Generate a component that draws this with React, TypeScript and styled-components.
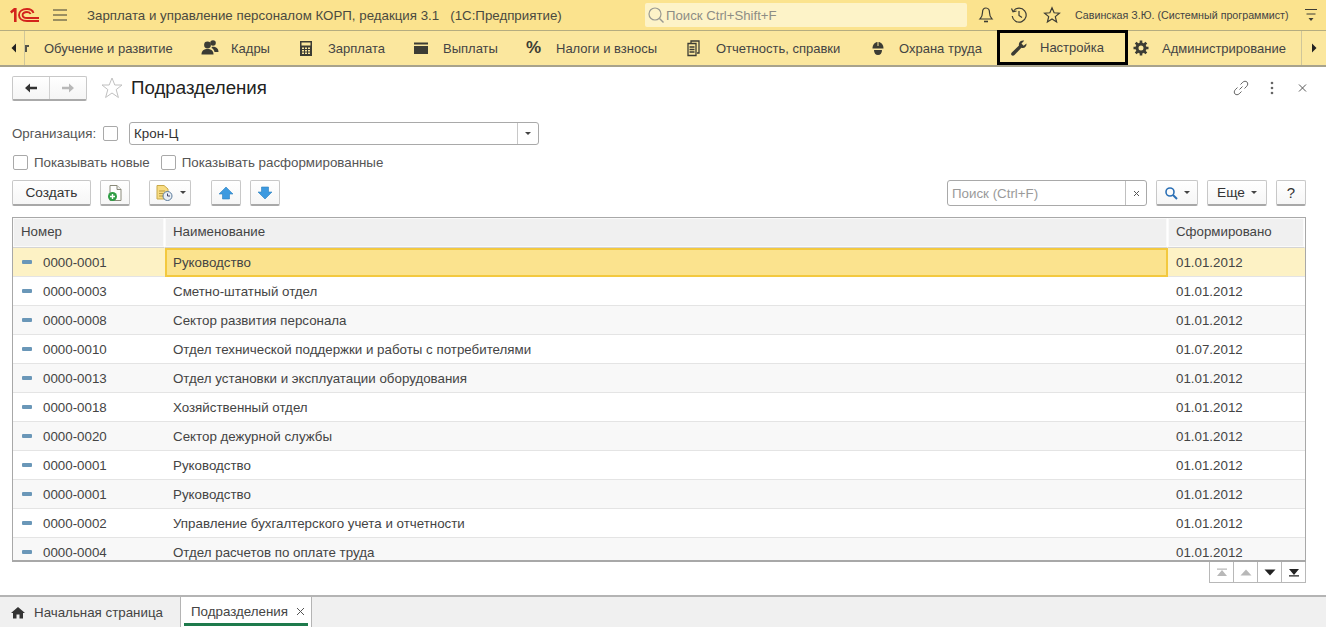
import React from "react";
import styled, { createGlobalStyle } from "styled-components";

const Global = createGlobalStyle`
  html, body { margin: 0; padding: 0; background: #fff; }
  body { font-family: "Liberation Sans", Arial, sans-serif; font-size: 13.33px; color: #333; overflow: hidden; }
  * { box-sizing: border-box; }
`;

const Page = styled.div`width: 1326px; height: 627px; display: flex; flex-direction: column; background: #fff; overflow: hidden;`;

const TitleBar = styled.header`height: 31px; background: #fbe38e; border-bottom: 1px solid #b5ad80; display: flex; align-items: center; flex: none;`;
const Logo = styled.svg`width: 29px; height: 14px; margin-left: 10px; flex: none;`;
const Burger = styled.svg`width: 14px; height: 12px; margin-left: 14px; flex: none;`;
const AppTitle = styled.div`margin-left: 20px; width: 558px; font-size: 13.3px; color: #4a4a40; white-space: pre; flex: none;`;
const GlobalSearch = styled.div`width: 322px; height: 24px; background: #fdf3c8; border-radius: 2px; display: flex; align-items: center; padding-left: 2px; gap: 1px; color: #8d8d85; font-size: 13.2px; flex: none;`;
const TopIcon = styled.svg<{ $ml: number }>`width: 18px; height: 18px; flex: none; margin-left: ${p => p.$ml}px;`;
const UserName = styled.div`margin-left: 14px; width: 220px; font-size: 10.7px; color: #444; white-space: nowrap; flex: none;`;
const TopMenu = styled.svg`width: 14px; height: 16px; margin-left: 9px; flex: none;`;

const SectionBar = styled.nav`height: 36px; background: #fbe79e; border-bottom: 2px solid #a8a38c; display: flex; align-items: stretch; flex: none;`;
const ScrollBtn = styled.div<{ $w: number; $pl: number; $side: string }>`width: ${p => p.$w}px; display: flex; align-items: center; padding-left: ${p => p.$pl}px; flex: none; border-${p => p.$side}: 1px solid #cfc69a;`;
const Section = styled.div<{ $w: number; $pl: number }>`display: flex; align-items: center; width: ${p => p.$w}px; flex: none; padding-left: ${p => p.$pl}px; font-size: 13px; color: #444; white-space: nowrap;`;
const ActiveSection = styled(Section)`border: 3px solid #000; margin-top: -1px; height: 35px;`;
const SectionIcon = styled.svg<{ $mr: number }>`width: 18px; height: 18px; flex: none; margin-right: ${p => p.$mr}px;`;
const Percent = styled.span`width: 18px; margin-right: 12px; font-size: 17px; font-weight: 700; line-height: 18px; color: #3c3c34; flex: none;`;
const Stub = styled.svg`width: 4px; height: 7px; flex: none; margin-right: 15px;`;

const FormHead = styled.div`height: 42px; display: flex; align-items: center; padding: 0 14px 0 12px; flex: none;`;
const NavGroup = styled.div`width: 75px; height: 25px; border: 1px solid #c8c8c8; border-bottom: 2px solid #aaa; border-radius: 2px; display: flex; flex: none; background: linear-gradient(#fff, #f5f5f5);`;
const NavBtn = styled.div`flex: 1; display: flex; align-items: center; justify-content: center; & + & { border-left: 1px solid #d0d0d0; }`;
const FavStar = styled.svg`width: 24px; height: 24px; margin-left: 13px; flex: none;`;
const FormTitle = styled.h1`margin: 0 0 0 7px; font-weight: 400; font-size: 18.7px; color: #222; flex: 1;`;
const HeadIcon = styled.svg<{ $ml: number }>`width: 18px; height: 18px; flex: none; margin-left: ${p => p.$ml}px;`;

const OrgRow = styled.div`height: 24px; display: flex; align-items: center; padding-left: 12px; margin-top: 12px; flex: none;`;
const Label = styled.span<{ $ml?: number }>`font-size: 13.33px; color: #555; white-space: nowrap; margin-left: ${p => p.$ml || 0}px;`;
const Check = styled.span<{ $ml?: number }>`width: 15px; height: 15px; border: 1px solid #a9a9a9; border-radius: 2px; background: #fff; flex: none; display: block; margin-left: ${p => p.$ml || 0}px;`;
const Combo = styled.div`width: 410px; height: 23px; margin-left: 11px; border: 1px solid #a9a9a9; border-radius: 3px; display: flex; align-items: center; padding-left: 4px; font-size: 13.33px; color: #333; flex: none;`;
const ComboValue = styled.span`flex: 1;`;
const ComboDrop = styled.span`width: 21px; height: 100%; border-left: 1px solid #c8c8c8; display: flex; align-items: center; justify-content: center;`;
const Caret = styled.i`display: block; width: 0; height: 0; border-left: 3px solid transparent; border-right: 3px solid transparent; border-top: 3px solid #444; flex: none;`;

const CheckRow = styled.div`height: 20px; margin-top: 7px; display: flex; align-items: center; padding-left: 13px; flex: none;`;

const Toolbar = styled.div`height: 26px; margin-top: 8px; display: flex; align-items: stretch; padding: 0 20px 0 12px; flex: none;`;
const Btn = styled.div<{ $w: number; $ml?: number; $gap?: number }>`width: ${p => p.$w}px; margin-left: ${p => p.$ml || 0}px; border: 1px solid #c8c8c8; border-bottom: 2px solid #a8a8a8; border-radius: 2px; background: linear-gradient(#fff, #f6f6f6); display: flex; align-items: center; justify-content: center; gap: ${p => p.$gap || 0}px; font-size: 13.7px; color: #333; flex: none;`;
const HelpBtn = styled(Btn)`font-size: 15px;`;
const SearchBox = styled.div`width: 200px; margin-left: auto; border: 1px solid #a9a9a9; border-radius: 3px; display: flex; align-items: center; padding-left: 4px; font-size: 13.33px; color: #9a9a9a; flex: none;`;
const SearchText = styled.span`flex: 1;`;
const SearchClear = styled.span`width: 21px; height: 100%; border-left: 1px solid #c0c0c0; display: flex; align-items: center; justify-content: center;`;

const TableWrap = styled.div`margin: 11px 20px 0 12px; height: 345px; border: 1px solid #a8a8a8; border-bottom-width: 2px; overflow: hidden; flex: none;`;
const Grid = styled.div`display: grid; grid-template-columns: 152px 1003px 1fr;`;
const HeadCell = styled.div`height: 30px; background: #f0f0f0; border-right: 1px solid #fff; border-bottom: 1px solid #d4d4d4; display: flex; align-items: center; padding: 0 0 2px 8px; font-size: 13.3px; color: #444; box-shadow: inset 0 0 0 1px #fafafa;`;
const Cell = styled.div<{ $sel?: boolean; $odd?: boolean; $pl?: number }>`height: 29px; display: flex; align-items: center; padding-left: ${p => p.$pl || 8}px; font-size: 13.33px; color: #444; white-space: nowrap; background: ${p => (p.$sel ? "#fdf2c5" : p.$odd ? "#f8f8f8" : "#fff")}; border-bottom: 1px solid #e4e4e4;`;
const ActiveCell = styled.div`height: 29px; display: flex; align-items: center; padding-left: 6px; font-size: 13.33px; color: #444; background: #fbe38e; border: 2px solid #f3c93f;`;
const Dash = styled.i`display: block; width: 10px; height: 4px; border-radius: 1px; background: #6a97b8; margin-right: 11px; flex: none;`;

const Pager = styled.div`display: flex; justify-content: flex-end; padding-right: 20px; flex: none;`;
const PageBtn = styled.div`width: 25px; height: 21px; border: 1px solid #b8b8b8; border-top: none; margin-left: -1px; display: flex; align-items: center; justify-content: center; background: #fff;`;

const Spacer = styled.div`flex: 1;`;
const TabBar = styled.footer`height: 32px; background: #f0f0f0; border-top: 2px solid #b4b4b4; display: flex; align-items: stretch; flex: none;`;
const HomeTab = styled.div`width: 181px; display: flex; align-items: center; padding-left: 11px; gap: 9px; font-size: 13.33px; color: #444; border-right: 1px solid #b4b4b4;`;
const OpenTab = styled.div`width: 131px; background: #fff; border-right: 1px solid #b4b4b4; display: flex; align-items: center; padding: 0 0 2px 10px; gap: 8px; font-size: 13.33px; color: #444; position: relative; &::after { content: ""; position: absolute; left: 3px; right: 3px; bottom: 1px; height: 3px; background: #1e7a4c; }`;

const rows = [
  ["0000-0001", "Руководство", "01.01.2012"],
  ["0000-0003", "Сметно-штатный отдел", "01.01.2012"],
  ["0000-0008", "Сектор развития персонала", "01.01.2012"],
  ["0000-0010", "Отдел технической поддержки и работы с потребителями", "01.07.2012"],
  ["0000-0013", "Отдел установки и эксплуатации оборудования", "01.01.2012"],
  ["0000-0018", "Хозяйственный отдел", "01.01.2012"],
  ["0000-0020", "Сектор дежурной службы", "01.01.2012"],
  ["0000-0001", "Руководство", "01.01.2012"],
  ["0000-0001", "Руководство", "01.01.2012"],
  ["0000-0002", "Управление бухгалтерского учета и отчетности", "01.01.2012"],
  ["0000-0004", "Отдел расчетов по оплате труда", "01.01.2012"],
];

const Ic = "#3c3c34";

export default function App() {
  return (
    <Page>
      <Global />
      <TitleBar>
        <Logo viewBox="0 0 29 14">
          <path d="M0 3.5L4 0H6.6V14H4V3.6L1.5 5.6Z" fill="#d3231c" />
          <g fill="none" stroke="#d3231c" strokeWidth="1.9">
            <path d="M23.5 5C22.6 2.2 20 1 17 1C12 1 9 3.5 9 7C9 10.5 12 13 17 13H29" />
            <path d="M20.6 6C20 4.6 18.7 4 17 4C14.3 4 12.6 5.3 12.6 7C12.6 8.7 14.3 10 17 10H29" />
          </g>
        </Logo>
        <Burger viewBox="0 0 14 12"><path d="M0 1H14M0 6H14M0 11H14" stroke={Ic} strokeWidth="1" /></Burger>
        <AppTitle>Зарплата и управление персоналом КОРП, редакция 3.1   (1С:Предприятие)</AppTitle>
        <GlobalSearch>
          <svg width="18" height="18" viewBox="0 0 18 18" fill="none"><circle cx="8" cy="8" r="6" stroke="#9a9a92" strokeWidth="1.2" /><path d="M12.5 12.5L16.5 16.5" stroke="#9a9a92" strokeWidth="1.4" /></svg>
          Поиск Ctrl+Shift+F
        </GlobalSearch>
        <TopIcon $ml={10} viewBox="0 0 18 18" fill="none" stroke={Ic} strokeWidth="1.2"><path d="M9 2C6.5 2 5.5 4 5.5 6.5C5.5 10 4.5 11.5 3 13H15C13.5 11.5 12.5 10 12.5 6.5C12.5 4 11.5 2 9 2Z" /><path d="M7 15.5H11" strokeWidth="1.6" /></TopIcon>
        <TopIcon $ml={15} viewBox="0 0 18 18" fill="none" stroke={Ic} strokeWidth="1.2"><path d="M3.5 5A7 7 0 1 1 2.2 10" /><path d="M1.5 2.5L3 5.8L6.5 5" /><path d="M9 5V9.5L12 11.5" /></TopIcon>
        <TopIcon $ml={15} viewBox="0 0 18 18" fill="none" stroke={Ic} strokeWidth="1.2"><path d="M9 1.8L11.1 6.8L16.4 7.2L12.3 10.6L13.6 15.9L9 13L4.4 15.9L5.7 10.6L1.6 7.2L6.9 6.8Z" /></TopIcon>
        <UserName>Савинская З.Ю. (Системный программист)</UserName>
        <TopMenu viewBox="0 0 14 16"><path d="M1 2.5H13M2.5 7H11.5" stroke={Ic} strokeWidth="1" /><path d="M4.5 11H9.5L7 14Z" fill={Ic} /></TopMenu>
      </TitleBar>

      <SectionBar>
        <ScrollBtn $w={25} $pl={11} $side="right">
          <svg width="6" height="10" viewBox="0 0 6 10"><path d="M5 0.5V9.5L0.5 5Z" fill="#222" /></svg>
        </ScrollBtn>
        <Section $w={162} $pl={0}>
          <Stub viewBox="0 0 4 7"><path d="M0 0H4V2H2V7H0Z" fill="#55554a" /></Stub>
          Обучение и развитие
        </Section>
        <Section $w={100} $pl={14}>
          <SectionIcon $mr={12} viewBox="0 0 18 18" fill={Ic}><circle cx="6.5" cy="6" r="3.4" /><path d="M0.5 15.5C0.5 11.5 3 10 6.5 10C10 10 12.5 11.5 12.5 15.5Z" /><circle cx="12" cy="4" r="2.8" /><path d="M11 7.8C14.5 7.5 17.5 9 17.5 13H13.5C13 11 12 9.5 10.5 9Z" /></SectionIcon>
          Кадры
        </Section>
        <Section $w={113} $pl={10}>
          <SectionIcon $mr={13} viewBox="0 0 18 18"><path fillRule="evenodd" fill={Ic} d="M3 2H15V17H3ZM4.5 3.5V6.5H13.5V3.5ZM5 8.5V10H7V8.5ZM8 8.5V10H10V8.5ZM11 8.5V10H13V8.5ZM5 11V12.5H7V11ZM8 11V12.5H10V11ZM11 11V12.5H13V11ZM5 13.5V15H7V13.5ZM8 13.5V15H10V13.5ZM11 13.5V15H13V13.5Z" /></SectionIcon>
          Зарплата
        </Section>
        <Section $w={113} $pl={12}>
          <SectionIcon $mr={13} viewBox="0 0 18 18"><path fillRule="evenodd" fill={Ic} d="M2 3.5H16V15H2ZM2 5.5V7H16V5.5Z" /></SectionIcon>
          Выплаты
        </Section>
        <Section $w={160} $pl={13}>
          <Percent>%</Percent>
          Налоги и взносы
        </Section>
        <Section $w={182} $pl={11}>
          <SectionIcon $mr={14} viewBox="0 0 18 18" fill="none" stroke={Ic} strokeWidth="1.3"><path d="M7 4V2H15V14H13" /><path d="M4 4.5H12V16.5H4Z" /><path d="M5.5 8H10.5M5.5 10.5H10.5M5.5 13H10.5" /></SectionIcon>
          Отчетность, справки
        </Section>
        <Section $w={142} $pl={14}>
          <SectionIcon $mr={12} viewBox="0 0 18 18"><path fill={Ic} d="M3.5 9.5C3.5 5.5 6 3 9 3C12 3 14.5 5.5 14.5 9.5Z" /><path stroke="#fbe79e" strokeWidth="1" d="M9 3V7" /><path fill={Ic} d="M5 11H13C13 14 11.5 16 9 16C6.5 16 5 14 5 11Z" /></SectionIcon>
          Охрана труда
        </Section>
        <ActiveSection $w={131} $pl={10}>
          <SectionIcon $mr={12} viewBox="0 0 18 18" fill={Ic}><path d="M16.5 4.5C16.8 6.5 15.2 9 12.8 9C12.2 9 11.8 8.9 11.4 8.7L4.5 16C3.5 17 2 16.8 1.4 16C0.9 15.3 1 14.2 1.8 13.4L9 6.6C8.7 5.8 8.8 4.8 9.3 3.8C10.2 2 12.5 1.2 14.2 1.8L11.5 4.6L13.6 6.7Z" /></SectionIcon>
          Настройка
        </ActiveSection>
        <Section $w={173} $pl={4}>
          <SectionIcon $mr={12} viewBox="0 0 18 18" fill="none" stroke={Ic}><circle cx="9" cy="9" r="4" strokeWidth="3" /><path strokeWidth="2.6" d="M9 1.5V4M9 14V16.5M1.5 9H4M14 9H16.5M3.7 3.7L5.5 5.5M12.5 12.5L14.3 14.3M3.7 14.3L5.5 12.5M12.5 5.5L14.3 3.7" /></SectionIcon>
          Администрирование
        </Section>
        <ScrollBtn $w={25} $pl={9} $side="left">
          <svg width="6" height="10" viewBox="0 0 6 10"><path d="M1 0.5V9.5L5.5 5Z" fill="#222" /></svg>
        </ScrollBtn>
      </SectionBar>

      <FormHead>
        <NavGroup>
          <NavBtn><svg width="14" height="10" viewBox="0 0 14 10"><path d="M6 0.5L1 5L6 9.5V6.2H13V3.8H6Z" fill="#333" /></svg></NavBtn>
          <NavBtn><svg width="14" height="10" viewBox="0 0 14 10"><path d="M8 0.5L13 5L8 9.5V6.2H1V3.8H8Z" fill="#b8b8b8" /></svg></NavBtn>
        </NavGroup>
        <FavStar viewBox="0 0 24 24" fill="none" stroke="#c0c0c0"><path d="M12 2L14.8 9H22L16.2 13.6L18.4 21.5L12 17L5.6 21.5L7.8 13.6L2 9H9.2Z" /></FavStar>
        <FormTitle>Подразделения</FormTitle>
        <HeadIcon $ml={0} viewBox="0 0 18 18" fill="none" stroke="#666" strokeWidth="1"><path d="M7.5 10.5L10.5 7.5" /><path d="M8.5 5.5L10.8 3.2C12 2 14 2 15 3C16 4 16 6 14.8 7.2L12.5 9.5" /><path d="M9.5 12.5L7.2 14.8C6 16 4 16 3 15C2 14 2 12 3.2 10.8L5.5 8.5" /></HeadIcon>
        <HeadIcon $ml={13} viewBox="0 0 18 18" fill="#666"><circle cx="9" cy="4" r="1.3" /><circle cx="9" cy="9" r="1.3" /><circle cx="9" cy="14" r="1.3" /></HeadIcon>
        <HeadIcon $ml={13} viewBox="0 0 18 18" fill="none" stroke="#555"><path d="M5 5.5L12 12.5M12 5.5L5 12.5" /></HeadIcon>
      </FormHead>

      <OrgRow>
        <Label>Организация:</Label>
        <Check $ml={7} />
        <Combo>
          <ComboValue>Крон-Ц</ComboValue>
          <ComboDrop><Caret /></ComboDrop>
        </Combo>
      </OrgRow>

      <CheckRow>
        <Check />
        <Label $ml={6}>Показывать новые</Label>
        <Check $ml={11} />
        <Label $ml={6}>Показывать расформированные</Label>
      </CheckRow>

      <Toolbar>
        <Btn $w={79}>Создать</Btn>
        <Btn $w={30} $ml={9}>
          <svg width="18" height="18" viewBox="0 0 18 18"><path d="M4 1.5H11L15 5.5V16.5H4Z" fill="#fff" stroke="#8a8a7a" /><path d="M11 1.5V5.5H15" fill="#eee" stroke="#8a8a7a" /><circle cx="6.5" cy="12.5" r="4.5" fill="#2f9e45" /><path d="M4 12.5H9M6.5 10V15" stroke="#fff" strokeWidth="1.4" /></svg>
        </Btn>
        <Btn $w={42} $ml={19} $gap={5}>
          <svg width="20" height="18" viewBox="0 0 20 18"><path d="M2 1.5H9L13 5V15H2Z" fill="#f8dc82" stroke="#c8a94a" /><path d="M4 7H10M4 9.5H8M4 12H8" stroke="#b89a40" /><circle cx="12.5" cy="12" r="4.5" fill="#e8eef4" stroke="#5a7a9a" /><path d="M12.5 9.5V12H15" stroke="#446" fill="none" /></svg>
          <Caret />
        </Btn>
        <Btn $w={30} $ml={20}>
          <svg width="16" height="14" viewBox="0 0 16 14"><path d="M8 1L15 8H11.5V13H4.5V8H1Z" fill="#3d9ae0" stroke="#2c7fc0" strokeWidth=".6" /></svg>
        </Btn>
        <Btn $w={30} $ml={9}>
          <svg width="16" height="14" viewBox="0 0 16 14"><path d="M8 13L15 6H11.5V1H4.5V6H1Z" fill="#3d9ae0" stroke="#2c7fc0" strokeWidth=".6" /></svg>
        </Btn>
        <SearchBox>
          <SearchText>Поиск (Ctrl+F)</SearchText>
          <SearchClear><svg width="7" height="7" viewBox="0 0 7 7"><path d="M1 1L6 6M6 1L1 6" stroke="#555" /></svg></SearchClear>
        </SearchBox>
        <Btn $w={42} $ml={9} $gap={6}>
          <svg width="14" height="14" viewBox="0 0 14 14" fill="none" stroke="#2a6fb5"><circle cx="6" cy="6" r="4" strokeWidth="1.6" /><path d="M9 9L13 13" strokeWidth="2" /></svg>
          <Caret />
        </Btn>
        <Btn $w={60} $ml={9} $gap={6}>Еще <Caret /></Btn>
        <HelpBtn $w={30} $ml={9}>?</HelpBtn>
      </Toolbar>

      <TableWrap>
        <Grid>
          <HeadCell>Номер</HeadCell>
          <HeadCell>Наименование</HeadCell>
          <HeadCell>Сформировано</HeadCell>
          {rows.map((r, i) => (
            <React.Fragment key={i}>
              <Cell $sel={i === 0} $odd={i % 2 === 0} $pl={9}><Dash />{r[0]}</Cell>
              {i === 0 ? <ActiveCell>{r[1]}</ActiveCell> : <Cell $odd={i % 2 === 0}>{r[1]}</Cell>}
              <Cell $sel={i === 0} $odd={i % 2 === 0}>{r[2]}</Cell>
            </React.Fragment>
          ))}
        </Grid>
      </TableWrap>

      <Pager>
        <PageBtn><svg width="12" height="9" viewBox="0 0 12 9"><path d="M1 0.5H11V1.8H1ZM6 2L11 8H1Z" fill="#b8b8b8" /></svg></PageBtn>
        <PageBtn><svg width="12" height="7" viewBox="0 0 12 7"><path d="M6 0.5L11.5 6.5H0.5Z" fill="#b8b8b8" /></svg></PageBtn>
        <PageBtn><svg width="12" height="7" viewBox="0 0 12 7"><path d="M6 6.5L11.5 0.5H0.5Z" fill="#222" /></svg></PageBtn>
        <PageBtn><svg width="12" height="9" viewBox="0 0 12 9"><path d="M1 7.2H11V8.5H1ZM6 7L11 1H1Z" fill="#222" /></svg></PageBtn>
      </Pager>

      <Spacer />
      <TabBar>
        <HomeTab>
          <svg width="14" height="13" viewBox="0 0 14 13"><path d="M7 1L14 7H12V12.5H8.5V8.5H5.5V12.5H2V7H0Z" fill="#333" /></svg>
          Начальная страница
        </HomeTab>
        <OpenTab>
          Подразделения
          <svg width="9" height="9" viewBox="0 0 9 9"><path d="M1 1L8 8M8 1L1 8" stroke="#555" /></svg>
        </OpenTab>
      </TabBar>
    </Page>
  );
}
